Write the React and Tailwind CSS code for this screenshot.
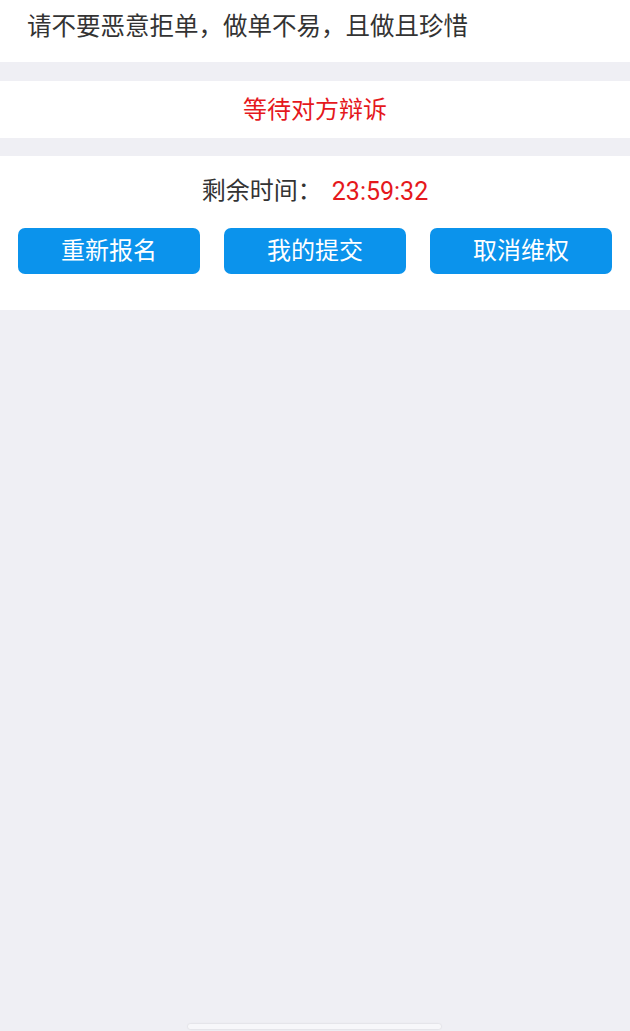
export default function App() {
  const font = { fontFamily: "Roboto, 'Noto Sans CJK SC', sans-serif" };
  return (
    <div className="relative min-h-[1031px] bg-[#efeff4]" style={font}>
      <div className="h-[62px] bg-white flex items-center pl-[27px] pb-[8px]">
        <span className="text-[24.5px] leading-none text-[#333333]">请不要恶意拒单，做单不易，且做且珍惜</span>
      </div>
      <div className="h-[19px]" />
      <div className="h-[57px] bg-white flex items-center justify-center">
        <span className="text-[24px] leading-none text-[#e5181c]">等待对方辩诉</span>
      </div>
      <div className="h-[18px]" />
      <div className="h-[154px] bg-white flex flex-col">
        <div className="flex items-center justify-center h-[70px]">
          <span className="text-[24px] leading-none text-[#333333]">剩余时间：</span>
          <span className="text-[25px] leading-none text-[#e5181c] ml-[10px]">23:59:32</span>
        </div>
        <div className="flex gap-[24px] px-[18px] pt-[2px]">
          {["重新报名", "我的提交", "取消维权"].map((t) => (
            <div key={t} className="flex-1 h-[46px] rounded-[7px] bg-[#0b93ec] flex items-center justify-center">
              <span className="text-[24px] leading-none text-white">{t}</span>
            </div>
          ))}
        </div>
      </div>
      <div className="absolute left-[188px] top-[1024px] w-[253px] h-[5px] rounded-[2px] bg-[#f7f7fa] shadow-[0_0_2px_rgba(0,0,0,0.15)]" />
    </div>
  );
}
